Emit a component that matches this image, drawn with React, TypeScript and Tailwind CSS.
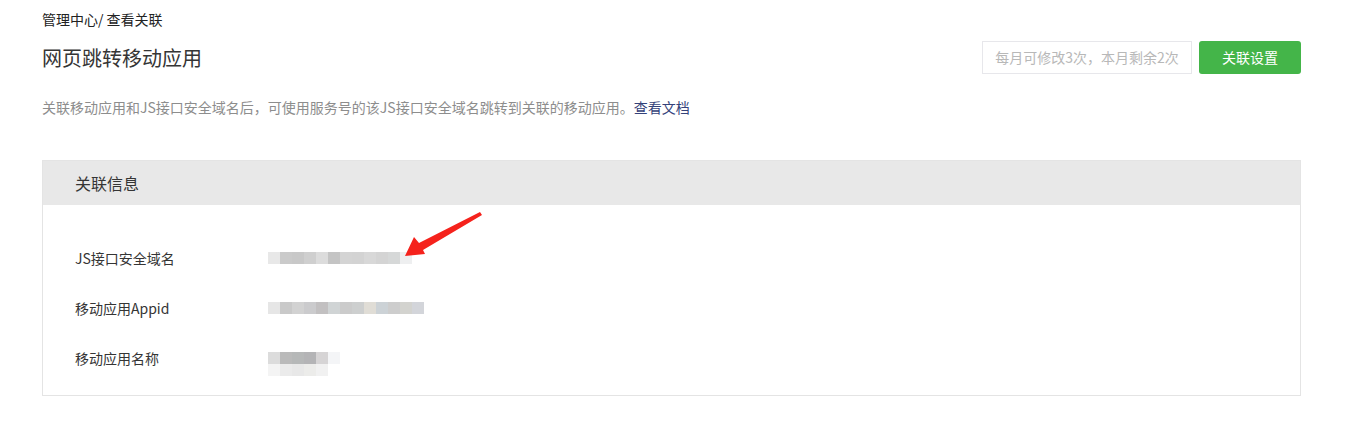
const jsCells = ['#e8e8e8', '#cacaca', '#c8c8c8', '#cfcfcf', '#dcdcdc', '#c4c4c4', '#d4d4d4', '#d3d3d3', '#d8d8d8', '#d4d4d4', '#d6d8d8', '#eeeff0'];
const appidCells = ['#e6e6e6', '#c9c9c9', '#d2d2d2', '#cbcbcd', '#c2c0c1', '#d0d4d5', '#cbcbcb', '#cdcfcf', '#e0ddd6', '#ccd2d6', '#cdcdcd', '#d3d3cf', '#d3d5da'];
const nameTop = ['#dcdcdc', '#bababa', '#b6b8b8', '#b4b4b6', '#d6d4d5', '#f4f5f7'];
const nameBottom = ['#f4f4f4', '#ebebeb', '#e8e8e8', '#ececea', '#f1f1f1', '#ffffff'];

function Mosaic({ rows }: { rows: string[][] }) {
  return (
    <div className="flex flex-col">
      {rows.map((row, i) => (
        <div key={i} className="flex">
          {row.map((c, j) => (
            <div key={j} className="h-[12px] w-[12px]" style={{ backgroundColor: c }} />
          ))}
        </div>
      ))}
    </div>
  );
}

const fields = [
  { label: 'JS接口安全域名', value: <Mosaic rows={[jsCells]} /> },
  { label: '移动应用Appid', value: <Mosaic rows={[appidCells]} /> },
  { label: '移动应用名称', value: <Mosaic rows={[nameTop, nameBottom]} />, offset: 'mt-[12px]' },
];

export default function App() {
  return (
    <div className="relative min-h-[429px] w-[1351px] bg-white font-['Microsoft_YaHei','Noto_Sans_CJK_SC',sans-serif] text-[#353535]">
      <div className="mx-[42px] w-[1259px] pt-[10px]">
        <p className="text-[14px] leading-[18px] text-[#222]">管理中心/ 查看关联</p>
        <div className="mt-[13px] flex items-center justify-between">
          <h1 className="text-[20px] leading-[30px] text-[#353535]">网页跳转移动应用</h1>
          <div className="flex items-center gap-[7px]">
            <div className="flex h-[33px] w-[210px] items-center justify-center border border-[#e7e7eb] text-[14px] text-[#b8b8b8]">
              每月可修改3次，本月剩余2次
            </div>
            <button className="h-[33px] w-[102px] rounded-[3px] bg-[#44b549] text-[14px] text-white">关联设置</button>
          </div>
        </div>
        <p className="mt-[23px] text-[14px] leading-[20px] text-[#8d8d8d]">
          关联移动应用和JS接口安全域名后，可使用服务号的该JS接口安全域名跳转到关联的移动应用。
          <a className="text-[#34427a]">查看文档</a>
        </p>
        <section className="mt-[43px] border border-[#e4e4e4]">
          <header className="flex h-[44px] items-center bg-[#e8e8e8] px-[32px] text-[16px] text-[#353535]">关联信息</header>
          <div className="px-[32px] pb-[12px] pt-[28px]">
            {fields.map((f) => (
              <div key={f.label} className="flex h-[50px] items-center text-[14px]">
                <span className="w-[193px]">{f.label}</span>
                <div className={f.offset}>{f.value}</div>
              </div>
            ))}
          </div>
        </section>
      </div>
      <svg className="pointer-events-none absolute left-0 top-0" width="1351" height="429">
        <polygon points="405,256 414,237 419,243 480,212 482,215 423,250 425,254" fill="#f5221c" />
      </svg>
    </div>
  );
}
